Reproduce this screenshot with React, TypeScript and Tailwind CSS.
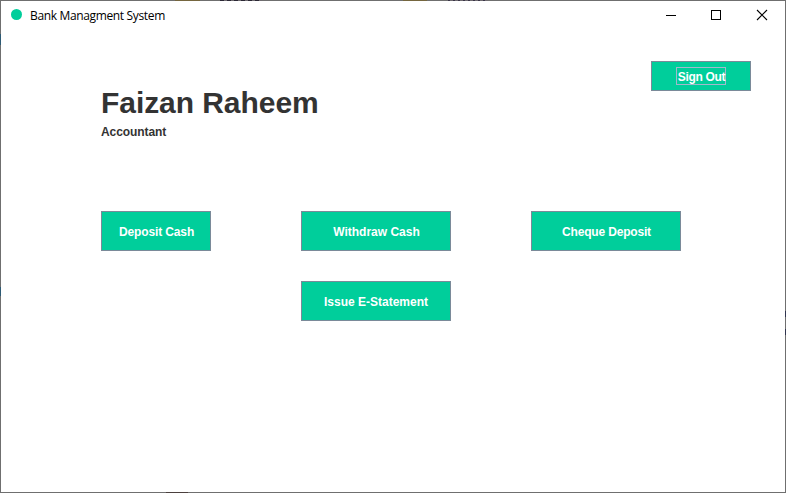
import React from "react";

function ActionButton({ label, className }: { label: string; className: string }) {
  return (
    <button
      className={`flex h-10 items-center justify-center border border-[#7a8a99] bg-[#00ce9b] pt-px text-[12px] leading-[14px] font-bold whitespace-nowrap text-white ${className}`}
    >
      {label}
    </button>
  );
}

function FrameTints() {
  return (
    <>
      <span className="absolute -top-px left-[174px] h-px w-[25px] bg-[#75663f]" />
      <span className="absolute -top-px left-[219px] h-px w-[42px] bg-[repeating-linear-gradient(90deg,#2b2835_0_4px,#6f6b70_4px_7px)]" />
      <span className="absolute -top-px left-[402px] h-px w-[24px] bg-[#75663f]" />
      <span className="absolute -top-px left-[447px] h-px w-[40px] bg-[repeating-linear-gradient(90deg,#3a3548_0_2px,#6f6b70_2px_5px)]" />
      <span className="absolute top-[33px] -left-px h-[11px] w-px bg-[#2d5a74]" />
      <span className="absolute top-[286px] -left-px h-[9px] w-px bg-[#2d5a74]" />
      <span className="absolute top-[310px] -right-px h-[6px] w-px bg-[#30344f]" />
      <span className="absolute top-[328px] -right-px h-[6px] w-px bg-[#30344f]" />
      <span className="absolute -bottom-px left-[165px] h-px w-[22px] bg-[#4b403e]" />
    </>
  );
}

export default function App() {
  return (
    <div className="relative flex h-[493px] w-[786px] flex-col border border-[#6f6f6f] bg-white font-['Liberation_Sans',Arial,sans-serif]">
      <FrameTints />
      <header className="flex h-[30px] shrink-0 items-center justify-between">
        <div className="flex items-center pl-[10px]">
          <span className="mr-2 mb-[3px] size-[11px] rounded-full bg-[#00ce9b]" />
          <span className="font-['Open_Sans','Noto_Sans',sans-serif] text-[12px] leading-4 tracking-[-0.35px] text-black">
            Bank Managment System
          </span>
        </div>
        <div className="flex text-black">
          <svg width="45" height="30" shapeRendering="crispEdges">
            <path d="M17 14.5h10" stroke="currentColor" />
          </svg>
          <svg width="46" height="30" shapeRendering="crispEdges">
            <rect x="17.5" y="9.5" width="9" height="9" fill="none" stroke="currentColor" />
          </svg>
          <svg width="45" height="30">
            <path d="M17 9l10 10M27 9L17 19" stroke="currentColor" strokeWidth="1.1" />
          </svg>
        </div>
      </header>
      <main className="flex flex-col px-[100px]">
        <div className="-mr-[66px] flex h-[150px] justify-between pt-[30px]">
          <div className="pt-[22px] text-[#333333]">
            <h1 className="text-[30px] leading-[40px] font-bold tracking-[-0.06px] whitespace-nowrap">
              Faizan Raheem
            </h1>
            <p className="mt-[2px] text-[12px] leading-[14px] font-bold tracking-[-0.08px]">Accountant</p>
          </div>
          <button className="flex h-[30px] w-[100px] items-center justify-center border border-[#7a8a99] bg-[#00ce9b] text-[12px] font-bold text-white">
            <span className="flex h-[18px] w-[50px] items-center justify-center border border-[#a3b8cc] pt-[2px] pl-px leading-[14px] tracking-[-0.3px] whitespace-nowrap">
              Sign Out
            </span>
          </button>
        </div>
        <div className="mt-[30px] grid grid-cols-[200px_230px_150px] gap-y-[30px]">
          <ActionButton label="Deposit Cash" className="w-[110px] pl-px tracking-[-0.12px]" />
          <ActionButton label="Withdraw Cash" className="w-[150px] pl-px" />
          <ActionButton label="Cheque Deposit" className="w-[150px] pl-px tracking-[-0.18px]" />
          <ActionButton label="Issue E-Statement" className="col-start-2 w-[150px]" />
        </div>
      </main>
    </div>
  );
}
